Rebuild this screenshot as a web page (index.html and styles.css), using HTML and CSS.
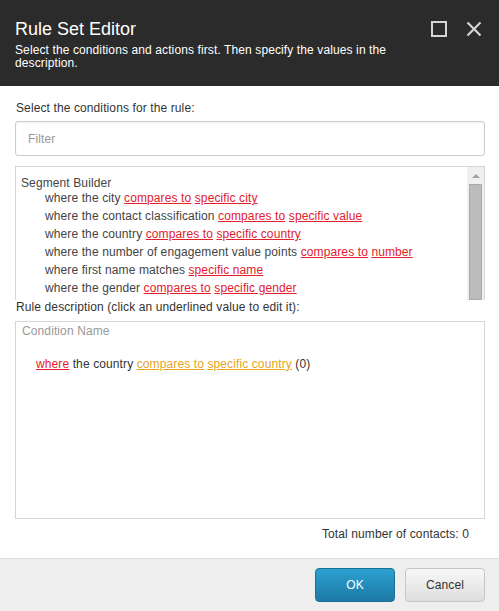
FILE: index.html
```html
<!DOCTYPE html>
<html>
<head>
<meta charset="utf-8">
<title>Rule Set Editor</title>
<link rel="stylesheet" href="styles.css">
</head>
<body>
<div class="dialog">
  <header class="header">
    <div class="header-text">
      <h1 class="title">Rule Set Editor</h1>
      <p class="subtitle">Select the conditions and actions first. Then specify the values in the description.</p>
    </div>
    <div class="header-icons">
      <svg class="icon" width="16" height="16" viewBox="0 0 16 16"><rect x="1" y="1" width="14" height="14" fill="none" stroke="#d4d4d4" stroke-width="2"/></svg>
      <svg class="icon" width="16" height="16" viewBox="0 0 16 16"><path d="M1.5 1.5 L14.5 14.5 M14.5 1.5 L1.5 14.5" stroke="#d4d4d4" stroke-width="2.2" fill="none"/></svg>
    </div>
  </header>

  <main class="content">
    <div class="label first">Select the conditions for the rule:</div>
    <div class="filter"><span class="placeholder">Filter</span></div>

    <div class="list-box">
      <div class="list">
        <div class="group">Segment Builder</div>
        <div class="row">where the city <a class="lnk">compares to</a> <a class="lnk">specific city</a></div>
        <div class="row">where the contact classification <a class="lnk">compares to</a> <a class="lnk">specific value</a></div>
        <div class="row">where the country <a class="lnk">compares to</a> <a class="lnk">specific country</a></div>
        <div class="row">where the number of engagement value points <a class="lnk">compares to</a> <a class="lnk">number</a></div>
        <div class="row">where first name matches <a class="lnk">specific name</a></div>
        <div class="row">where the gender <a class="lnk">compares to</a> <a class="lnk">specific gender</a></div>
      </div>
      <div class="scrollbar">
        <div class="scroll-up"><span class="arrow"></span></div>
        <div class="thumb"></div>
      </div>
    </div>

    <div class="label">Rule description (click an underlined value to edit it):</div>
    <div class="desc-box">
      <div class="cond-name">Condition Name</div>
      <div class="cond-line"><a class="lnk">where</a> the country <a class="val">compares to</a> <a class="val">specific country</a> (0)</div>
    </div>
    <div class="total">Total number of contacts: 0</div>
  </main>

  <footer class="footer">
    <button class="btn btn-ok">OK</button>
    <button class="btn btn-cancel">Cancel</button>
  </footer>
</div>
</body>
</html>
```

FILE: styles.css
```css
html, body {
  margin: 0;
  padding: 0;
  background: #ffffff;
}

body {
  font-family: "Liberation Sans", Arial, sans-serif;
  font-size: 12px;
  letter-spacing: 0.11px;
  color: #333333;
}

.dialog {
  width: 499px;
  height: 611px;
  display: flex;
  flex-direction: column;
  overflow: hidden;
}

.header {
  background: #2b2b2b;
  height: 86px;
  box-sizing: border-box;
  padding: 18px 17px 0 15px;
  display: flex;
  justify-content: space-between;
  align-items: flex-start;
}

.header-text {
  width: 410px;
}

.title {
  margin: 0;
  font-size: 18px;
  line-height: 22px;
  font-weight: normal;
  letter-spacing: 0;
  color: #ffffff;
}

.subtitle {
  margin: 4px 0 0 0;
  font-size: 12px;
  line-height: 13px;
  color: #ffffff;
}

.header-icons {
  display: flex;
  gap: 19px;
  margin-top: 3px;
}

.icon {
  display: block;
}

.content {
  flex: 1;
  padding: 0 14px 0 15px;
  display: flex;
  flex-direction: column;
}

.label {
  line-height: 14px;
  margin: 0 0 7px 1px;
  color: #333333;
}

.label.first {
  margin-top: 15px;
  margin-bottom: 6px;
}

.filter {
  height: 35px;
  box-sizing: border-box;
  border: 1px solid #cccccc;
  border-radius: 3px;
  box-shadow: inset 0 1px 2px rgba(0, 0, 0, 0.06);
  padding: 0 12px;
  display: flex;
  align-items: center;
  margin-bottom: 10px;
}

.placeholder {
  color: #999999;
}

.list-box {
  height: 134px;
  box-sizing: border-box;
  border: 1px solid #d6d6d6;
  border-bottom: none;
  display: flex;
  overflow: hidden;
}

.list {
  flex: 1;
  padding: 10px 0 0 5px;
  color: #444444;
  white-space: nowrap;
  overflow: hidden;
}

.group {
  line-height: 12px;
}

.row {
  line-height: 18px;
  padding-left: 24px;
}

.lnk {
  color: #e2202c;
  text-decoration: underline;
}

.val {
  color: #e6a619;
  text-decoration: underline;
}

.scrollbar {
  width: 17px;
  background: #f0f0f0;
  display: flex;
  flex-direction: column;
  align-items: center;
}

.scroll-up {
  height: 17px;
  width: 17px;
  display: flex;
  align-items: center;
  justify-content: center;
}

.arrow {
  width: 0;
  height: 0;
  border-left: 4px solid transparent;
  border-right: 4px solid transparent;
  border-bottom: 4px solid #a3a3a3;
}

.thumb {
  flex: 1;
  width: 11px;
  background: #bcbcbc;
  border: 1px solid #a9a9a9;
}

.desc-box {
  height: 198px;
  box-sizing: border-box;
  border: 1px solid #d6d6d6;
  padding: 2px 6px;
}

.cond-name {
  color: #999999;
  line-height: 14px;
}

.cond-line {
  margin-top: 19px;
  padding-left: 14px;
  line-height: 14px;
  color: #333333;
}

.total {
  margin-top: 8px;
  line-height: 14px;
  text-align: right;
  padding-right: 16px;
  color: #333333;
}

.footer {
  height: 53px;
  box-sizing: border-box;
  background: #eeeeee;
  border-top: 1px solid #dcdcdc;
  display: flex;
  justify-content: flex-end;
  align-items: flex-start;
  gap: 10px;
  padding: 9px 14px 0 0;
}

.btn {
  width: 80px;
  height: 34px;
  border-radius: 4px;
  font-family: "Liberation Sans", Arial, sans-serif;
  font-size: 12px;
  letter-spacing: 0.11px;
  cursor: pointer;
}

.btn-ok {
  background: linear-gradient(#2ca0d0, #1d7aa4);
  border: 1px solid #1a6f97;
  color: #ffffff;
}

.btn-cancel {
  background: linear-gradient(#f8f8f8, #dedede);
  border: 1px solid #c6c6c6;
  color: #333333;
}
```
